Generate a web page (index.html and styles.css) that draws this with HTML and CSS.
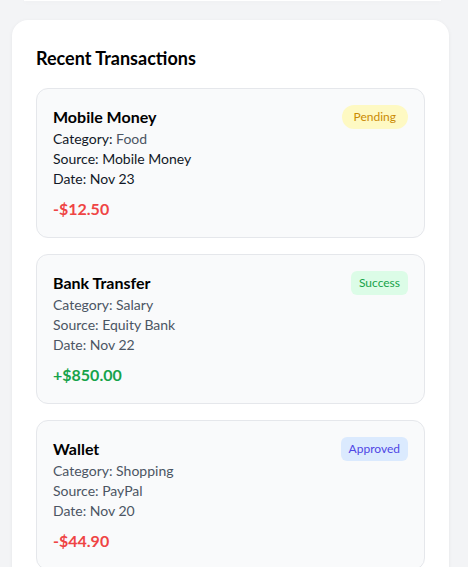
FILE: index.html
```html
<!DOCTYPE html>
<html lang="en">
<head>
  <meta charset="UTF-8" />
  <meta name="viewport" content="width=device-width, initial-scale=1.0">
  <title>Recent Transactions</title>
  <link rel="stylesheet" href="styles.css">
</head>
<body>
  <!-- tail of the card above, scrolled out of view -->
  <div class="prev-card"></div>

  <section class="panel">
    <h2 class="panel-title">Recent Transactions</h2>

    <div class="tx-list">
      <div class="tx-item tx-active">
        <div class="tx-head">
          <h3 class="tx-name">Mobile Money</h3>
          <span class="badge badge-pending">Pending</span>
        </div>
        <p class="tx-line">Category: <span class="tx-muted">Food</span></p>
        <p class="tx-line">Source: Mobile Money</p>
        <p class="tx-line">Date: Nov 23</p>
        <p class="tx-amount minus">-$12.50</p>
      </div>

      <div class="tx-item">
        <div class="tx-head">
          <h3 class="tx-name">Bank Transfer</h3>
          <span class="badge badge-success">Success</span>
        </div>
        <p class="tx-line">Category: Salary</p>
        <p class="tx-line">Source: Equity Bank</p>
        <p class="tx-line">Date: Nov 22</p>
        <p class="tx-amount plus">+$850.00</p>
      </div>

      <div class="tx-item">
        <div class="tx-head">
          <h3 class="tx-name">Wallet</h3>
          <span class="badge badge-approved">Approved</span>
        </div>
        <p class="tx-line">Category: Shopping</p>
        <p class="tx-line">Source: PayPal</p>
        <p class="tx-line">Date: Nov 20</p>
        <p class="tx-amount minus">-$44.90</p>
      </div>
    </div>
  </section>
</body>
</html>
```

FILE: styles.css
```css
html, body {
  margin: 0;
  padding: 0;
  background-color: #f3f4f6;
  color: #111827;
  font-family: Lato, 'Open Sans', sans-serif;
}

body {
  padding: 0 19px 0 12px;
}

.prev-card {
  height: 1px;
  margin: 0 8px 0 12px;
  background: #fff;
  box-shadow: 0 1px 4px rgba(0, 0, 0, 0.06);
}

.panel {
  margin-top: 19px;
  background: #fff;
  border-radius: 16px;
  padding: 24px;
  box-shadow: 0 1px 4px rgba(0, 0, 0, 0.06);
}

.panel-title {
  margin: 0 0 16px;
  font-size: 18px;
  line-height: 28px;
  font-weight: 700;
  color: #000;
}

.tx-list {
  display: flex;
  flex-direction: column;
  gap: 16px;
}

.tx-item {
  background: #f9fafb;
  border: 1px solid #e5e7eb;
  border-radius: 12px;
  padding: 16px;
}

.tx-head {
  display: flex;
  justify-content: space-between;
  align-items: flex-start;
}

.tx-name {
  margin: 0;
  font-size: 16px;
  line-height: 24px;
  font-weight: 700;
  color: #000;
}

.badge {
  font-size: 12px;
  line-height: 24px;
  padding: 0 8px;
  border-radius: 6px;
}

.badge-pending {
  background: #fef9c3;
  color: #ca8a04;
  border-radius: 999px;
  padding: 0 12px;
}

.badge-success {
  background: #dcfce7;
  color: #16a34a;
}

.badge-approved {
  background: #dbeafe;
  color: #4f46e5;
}

.tx-line {
  margin: 0;
  font-size: 14px;
  line-height: 20px;
  color: #4b5563;
}

.tx-active .tx-line {
  color: #111827;
}

.tx-active .tx-muted {
  color: #4b5563;
}

.tx-amount {
  margin: 8px 0 0;
  font-size: 16px;
  line-height: 24px;
  font-weight: 700;
}

.minus {
  color: #ef4444;
}

.plus {
  color: #16a34a;
}
```
